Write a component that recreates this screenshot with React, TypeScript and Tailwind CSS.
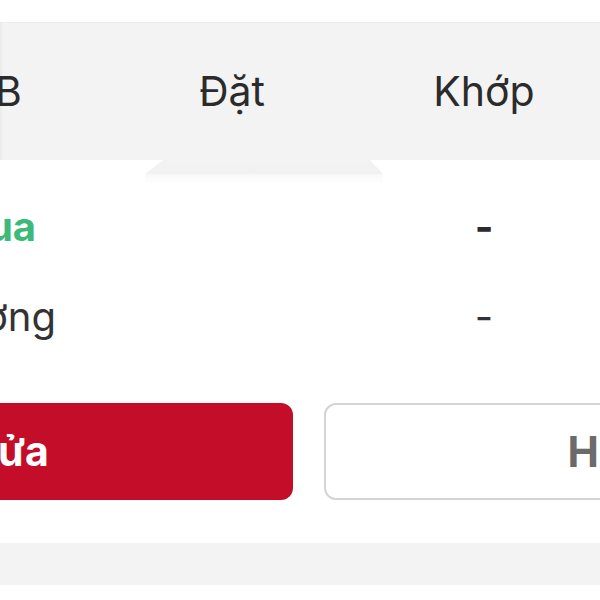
export default function App() {
  return (
    <div className="relative w-[600px] h-[600px] overflow-hidden bg-white font-['Inter','Liberation_Sans',sans-serif]">
      <div className="h-[22px]" />

      {/* header tabs */}
      <div className="h-[138px] bg-[#f3f3f3] border-t border-l-2 border-[#ececec]">
        <div className="ml-[-148px] w-[756px] h-full grid grid-cols-3 items-center text-[41px] text-[#2b2b2b] whitespace-nowrap">
          <div className="text-center">SHB</div>
          <div className="text-center">Đặt</div>
          <div className="text-center">Khớp</div>
        </div>
      </div>

      {/* active tab notch */}
      <svg
        className="absolute left-[145px] top-[160px]"
        width="238"
        height="24"
        viewBox="0 0 238 24"
      >
        <defs>
          <linearGradient id="notch" x1="0" y1="0" x2="0" y2="1">
            <stop offset="0" stopColor="#f3f3f3" />
            <stop offset="1" stopColor="#f1f1f1" />
          </linearGradient>
          <linearGradient id="shade" x1="0" y1="0" x2="0" y2="1">
            <stop offset="0" stopColor="#f8f8f8" />
            <stop offset="1" stopColor="#ffffff" />
          </linearGradient>
        </defs>
        <rect x="0" y="14" width="238" height="10" fill="url(#shade)" />
        <polygon points="18,0 225,0 238,14 0,14" fill="url(#notch)" />
      </svg>

      <div className="h-[22px]" />

      {/* rows */}
      <div className="ml-[-146px] w-[756px] grid grid-cols-3 items-center h-[90px] text-[40px] whitespace-nowrap">
        <div className="flex justify-end pr-[70px] font-bold text-[#3dba7b]">Mua</div>
        <div />
        <div className="text-center font-bold text-[#2b2b2b]">-</div>
      </div>
      <div className="ml-[-146px] w-[756px] grid grid-cols-3 items-center h-[90px] text-[40px] whitespace-nowrap text-[#333333]">
        <div className="flex justify-end pr-[50px]">Khối lượng</div>
        <div />
        <div className="text-center">-</div>
      </div>

      {/* actions */}
      <div className="mt-[41px] ml-[-269px] flex gap-[31px] whitespace-nowrap">
        <button className="w-[562px] h-[97px] shrink-0 rounded-[12px] bg-[#c30d29] text-white text-[41px] font-bold pr-[4px]">
          Sửa
        </button>
        <button className="w-[562px] h-[97px] shrink-0 rounded-[12px] border-2 border-[#d4d4d4] bg-white text-[#6b6b6b] text-[42px] font-bold pl-[8px]">
          Hủy
        </button>
      </div>

      <div className="mt-[43px] h-[42px] bg-[#f3f3f3]" />
    </div>
  );
}
